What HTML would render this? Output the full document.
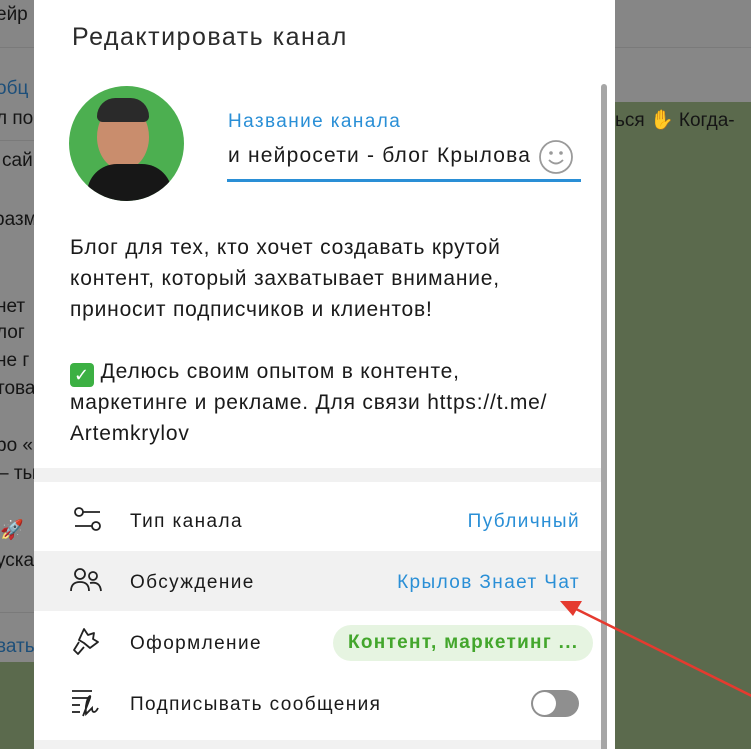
<!DOCTYPE html>
<html><head><meta charset="utf-8"><style>
*{margin:0;padding:0;box-sizing:border-box}
html{width:751px;height:749px;overflow:hidden}
body{width:751px;height:749px;overflow:hidden;position:relative;background:#878787;font-family:"Liberation Sans","DejaVu Sans",sans-serif;}
.a{position:absolute;white-space:nowrap}
.bgt{font-size:19px;color:#151515}
.r{font-size:19px;letter-spacing:1.4px}
</style></head><body>
<div class="a" style="left:0;top:0;width:751px;height:47px;background:#868686"></div>
<div class="a" style="left:0;top:47px;width:751px;height:1px;background:#7a7a7a"></div>
<div class="a" style="left:0;top:140px;width:34px;height:1px;background:#7a7a7a"></div>
<div class="a" style="left:615px;top:102px;width:136px;height:647px;background:#5b6a4d"></div>
<div class="a" style="left:0;top:662px;width:34px;height:87px;background:#5b6a4d"></div>
<div class="a" style="left:0;top:612px;width:34px;height:1px;background:#7a7a7a"></div>
<div class="a bgt" style="left:-4px;top:4px">ейр</div>
<div class="a bgt" style="left:-4px;top:78px;color:#1d4f7a">обц</div>
<div class="a bgt" style="left:-4px;top:108px">л по</div>
<div class="a bgt" style="left:2px;top:150px">сай</div>
<div class="a bgt" style="left:-6px;top:209px">разм</div>
<div class="a bgt" style="left:-4px;top:296px">нет</div>
<div class="a bgt" style="left:-4px;top:322px">лог</div>
<div class="a bgt" style="left:-4px;top:350px">не г</div>
<div class="a bgt" style="left:-4px;top:378px">това</div>
<div class="a bgt" style="left:-4px;top:435px">ро «</div>
<div class="a bgt" style="left:-2px;top:463px">– ты</div>
<div class="a bgt" style="left:0;top:518px">🚀</div>
<div class="a bgt" style="left:-4px;top:550px">уска</div>
<div class="a bgt" style="left:-4px;top:636px;color:#1d4f7a">вать</div>
<div class="a bgt" style="left:615px;top:108px">ься <span style="color:#8a5a20">✋</span> Когда-</div>

<div class="a" style="left:34px;top:-10px;width:581px;height:759px;background:#fff;border-radius:10px 10px 0 0"></div>
<div class="a" style="left:72px;top:23px;font-size:25px;letter-spacing:1.5px;color:#2b2b2b">Редактировать канал</div>
<div class="a" style="left:69px;top:86px;width:115px;height:115px;border-radius:50%;background:#4caf50;overflow:hidden">
  <div class="a" style="left:28px;top:18px;width:52px;height:66px;border-radius:50%;background:#c98d6d"></div>
  <div class="a" style="left:28px;top:12px;width:52px;height:24px;border-radius:26px 26px 8px 8px;background:#2a2a2a"></div>
  <div class="a" style="left:18px;top:78px;width:85px;height:50px;border-radius:30px 30px 0 0;background:#171717"></div>
</div>
<div class="a" style="left:228px;top:111px;font-size:19px;letter-spacing:1.4px;color:#2a8fd6">Название канала</div>
<div class="a" style="left:228px;top:144px;font-size:21px;letter-spacing:1.2px;color:#1a1a1a">и нейросети - блог Крылова</div>
<svg class="a" style="left:538px;top:139px" width="36" height="36" viewBox="0 0 36 36"><circle cx="18" cy="18" r="16" fill="none" stroke="#9a9a9a" stroke-width="1.8"/><circle cx="13" cy="14" r="1.8" fill="#9a9a9a"/><circle cx="23" cy="14" r="1.8" fill="#9a9a9a"/><path d="M11 21q7 7 14 0" fill="none" stroke="#9a9a9a" stroke-width="1.8"/></svg>
<div class="a" style="left:227px;top:179px;width:354px;height:3px;background:#2a8fd6"></div>

<div class="a" style="left:70px;top:232px;font-size:21px;line-height:31px;color:#1a1a1a;letter-spacing:0.8px">Блог для тех, кто хочет создавать крутой<br>контент, который захватывает внимание,<br>приносит подписчиков и клиентов!<br><br><span style="display:inline-block;width:24px;height:24px;background:#3cb043;border-radius:4px;color:#fff;text-align:center;line-height:24px;font-size:18px;vertical-align:-3px">✓</span> Делюсь своим опытом в контенте,<br>маркетинге и рекламе. Для связи https://t.me/<br>Artemkrylov</div>

<div class="a" style="left:34px;top:468px;width:567px;height:14px;background:#f1f1f1"></div>
<div class="a" style="left:34px;top:551px;width:567px;height:60px;background:#f1f1f1"></div>
<div class="a" style="left:34px;top:740px;width:567px;height:9px;background:#f1f1f1"></div>

<svg class="a" style="left:70px;top:506px" width="34" height="30" viewBox="0 0 34 30"><g fill="none" stroke="#222" stroke-width="1.8"><circle cx="9" cy="6" r="4"/><line x1="13" y1="6" x2="30" y2="6"/><circle cx="26" cy="20" r="4"/><line x1="5" y1="20" x2="22" y2="20"/></g></svg>
<div class="a r" style="left:130px;top:511px;color:#1a1a1a">Тип канала</div>
<div class="a r" style="right:171px;top:511px;color:#2a8fd6">Публичный</div>

<svg class="a" style="left:70px;top:566px" width="34" height="30" viewBox="0 0 34 30"><g fill="none" stroke="#222" stroke-width="1.8"><circle cx="10" cy="8" r="5"/><path d="M1 25q0-9 9-9t9 9"/><circle cx="23" cy="10" r="4"/><path d="M20 17q10-2 11 8"/></g></svg>
<div class="a r" style="left:130px;top:572px;color:#1a1a1a">Обсуждение</div>
<div class="a r" style="right:171px;top:572px;color:#2a8fd6">Крылов Знает Чат</div>

<svg class="a" style="left:70px;top:625px" width="34" height="34" viewBox="0 0 34 34"><g fill="none" stroke="#222" stroke-width="1.8" stroke-linejoin="round"><path d="M14 4l4 6 6-2-1 6 5 3-8 6-6-5-5-3z"/><path d="M9 17l-5 8 4 4 6-7"/></g></svg>
<div class="a r" style="left:130px;top:633px;color:#1a1a1a">Оформление</div>
<div class="a" style="left:333px;top:625px;width:260px;height:36px;border-radius:18px;background:#e6f4e1"></div>
<div class="a" style="left:348px;top:632px;font-size:19px;letter-spacing:1.3px;font-weight:bold;color:#43a62c">Контент, маркетинг ...</div>

<svg class="a" style="left:70px;top:688px" width="36" height="32" viewBox="0 0 36 32"><g fill="none" stroke="#222" stroke-width="1.8"><line x1="2" y1="3" x2="22" y2="3"/><line x1="2" y1="10" x2="18" y2="10"/><line x1="2" y1="17" x2="10" y2="17"/><line x1="2" y1="24" x2="10" y2="24"/><path d="M13 28q4-10 7-18q1-4-2 0q-3 8-2 16q4-4 6-6q0 4 2 4q2 0 4-4"/></g></svg>
<div class="a r" style="left:130px;top:694px;color:#1a1a1a">Подписывать сообщения</div>
<div class="a" style="left:531px;top:690px;width:48px;height:27px;border-radius:14px;background:#8f8f8f"></div>
<div class="a" style="left:533px;top:692px;width:23px;height:23px;border-radius:50%;background:#fff"></div>

<div class="a" style="left:601px;top:84px;width:6px;height:665px;border-radius:3px 3px 0 0;background:#a6a6a6"></div>

<svg class="a" style="left:0;top:0" width="751" height="749"><line x1="572" y1="607" x2="760" y2="700" stroke="#e53a2f" stroke-width="2.5"/><path d="M560 601l22 0-9 15z" fill="#e53a2f"/></svg>
</body></html>
